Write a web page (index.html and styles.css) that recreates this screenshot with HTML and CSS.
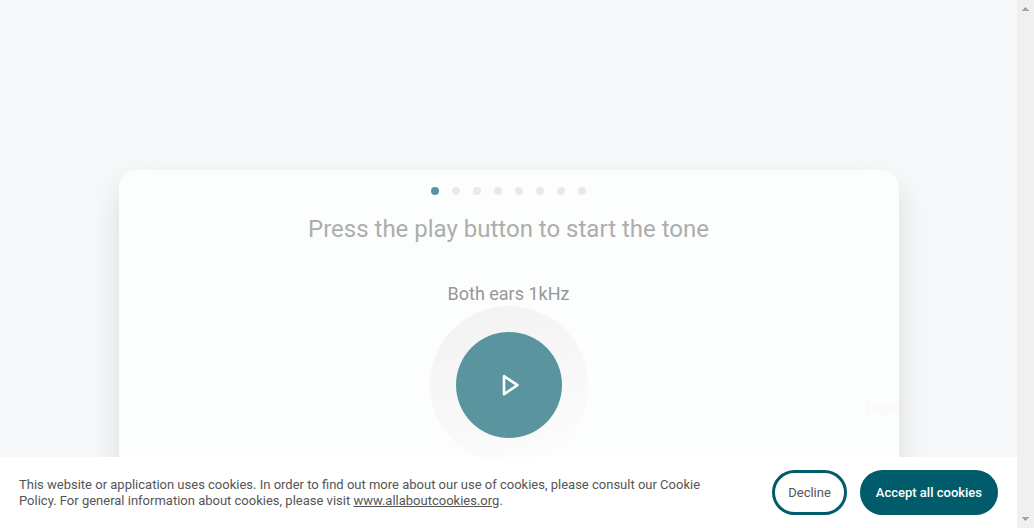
FILE: index.html
```html
<!DOCTYPE html>
<html lang="en">
<head>
<meta charset="utf-8">
<meta name="viewport" content="width=device-width, initial-scale=1">
<title>Hearing test</title>
<link rel="stylesheet" href="styles.css">
</head>
<body>
<div class="window">
  <div class="page">
    <main class="stage">
      <section class="card">
        <ol class="steps">
          <li class="step step-current"></li>
          <li class="step"></li>
          <li class="step"></li>
          <li class="step"></li>
          <li class="step"></li>
          <li class="step"></li>
          <li class="step"></li>
          <li class="step"></li>
        </ol>
        <h1 class="title">Press the play button to start the tone</h1>
        <p class="tone">Both ears 1kHz</p>
        <div class="ring">
          <button class="play" type="button" aria-label="Play">
            <svg class="play-icon" viewBox="0 0 24 24" aria-hidden="true"><path d="M7 3.200V21.200L20.500 12.200Z" fill="none" stroke="currentColor" stroke-width="2.600" stroke-linejoin="round"/></svg>
          </button>
        </div>
        <a class="legal" href="#">Legal</a>
      </section>
    </main>
    <aside class="cookies">
      <p class="cookies-text">This website or application uses cookies. In order to find out more about our use of cookies, please consult our Cookie Policy. For general information about cookies, please visit <a class="cookies-link" href="#">www.allaboutcookies.org</a>.</p>
      <div class="cookies-actions">
        <button class="button button-outline" type="button">Decline</button>
        <button class="button button-solid" type="button">Accept all cookies</button>
      </div>
    </aside>
  </div>
  <div class="scrollbar" aria-hidden="true">
    <svg class="arrow" viewBox="0 0 7 4"><path d="M3 0h1v1h1v1h1v1h1v1H0V3h1V2h1V1h1z" fill="#a3a3a3"/></svg>
    <svg class="arrow" viewBox="0 0 7 4"><path d="M0 0h7v1H6v1H5v1H4v1H3V3H2V2H1V1H0z" fill="#a3a3a3"/></svg>
  </div>
</div>
</body>
</html>
```
FILE: styles.css
```css
* {
  box-sizing: border-box;
}

body {
  margin: 0;
  font-family: Roboto, "Liberation Sans", sans-serif;
  background: #f7f8fa;
}

.window {
  display: flex;
  height: 100vh;
  overflow: hidden;
}

.page {
  display: flex;
  flex: 1;
  flex-direction: column;
  min-width: 0;
}

.stage {
  flex: 1;
  min-height: 0;
  padding: 170px 20px 0;
  overflow: hidden;
}

.card {
  position: relative;
  display: flex;
  flex-direction: column;
  align-items: center;
  max-width: 780px;
  min-height: 480px;
  margin: 0 auto;
  padding-top: 17px;
  border-radius: 18px;
  background: #fcfefd;
  box-shadow: 0 16px 32px rgba(0, 0, 0, 0.12);
}

.steps {
  display: flex;
  gap: 13px;
  margin: 0;
  padding: 0;
  list-style: none;
}

.step {
  width: 8px;
  height: 8px;
  border-radius: 50%;
  background: #e9e9e9;
}

.step-current {
  background: #5a949f;
}

.title {
  margin: 18px 0 0;
  font-size: 24px;
  font-weight: 400;
  line-height: 32px;
  color: #adadad;
}

.tone {
  margin: 37px 0 0;
  font-size: 18px;
  line-height: 24px;
  color: #979797;
}

.ring {
  display: flex;
  align-items: center;
  justify-content: center;
  width: 158px;
  height: 158px;
  border-radius: 50%;
  background: linear-gradient(160deg, #f2f2f2, #fcfdfc);
}

.play {
  display: flex;
  align-items: center;
  justify-content: center;
  width: 106px;
  height: 106px;
  padding: 0;
  border: 0;
  border-radius: 50%;
  color: #fff;
  background: #5a949f;
}

.play-icon {
  width: 24px;
  height: 24px;
}

.legal {
  position: absolute;
  top: 231px;
  right: 0;
  font-size: 13px;
  line-height: 16px;
  color: #f8f8f8;
  text-decoration: none;
}

.cookies {
  position: relative;
  display: flex;
  align-items: center;
  justify-content: space-between;
  gap: 40px;
  padding: 13px 19px;
  background: #fff;
}

.cookies-text {
  flex: 1;
  max-width: 700px;
  margin: 0;
  font-size: 13px;
  line-height: 16px;
  color: #555;
}

.cookies-link {
  color: inherit;
}

.cookies-actions {
  display: flex;
  flex-shrink: 0;
  gap: 13px;
}

.button {
  height: 45px;
  padding: 0 13px;
  border: 3px solid #005b6a;
  border-radius: 23px;
  font-family: inherit;
  font-size: 13px;
}

.button-outline {
  color: #555;
  background: #fff;
}

.button-solid {
  font-weight: 500;
  color: #fff;
  background: #005b6a;
}

.scrollbar {
  display: flex;
  flex-direction: column;
  align-items: center;
  justify-content: space-between;
  width: 17px;
  padding: 7px 0;
  background: #f0f0f0;
}

.arrow {
  width: 7px;
  height: 4px;
}
```
